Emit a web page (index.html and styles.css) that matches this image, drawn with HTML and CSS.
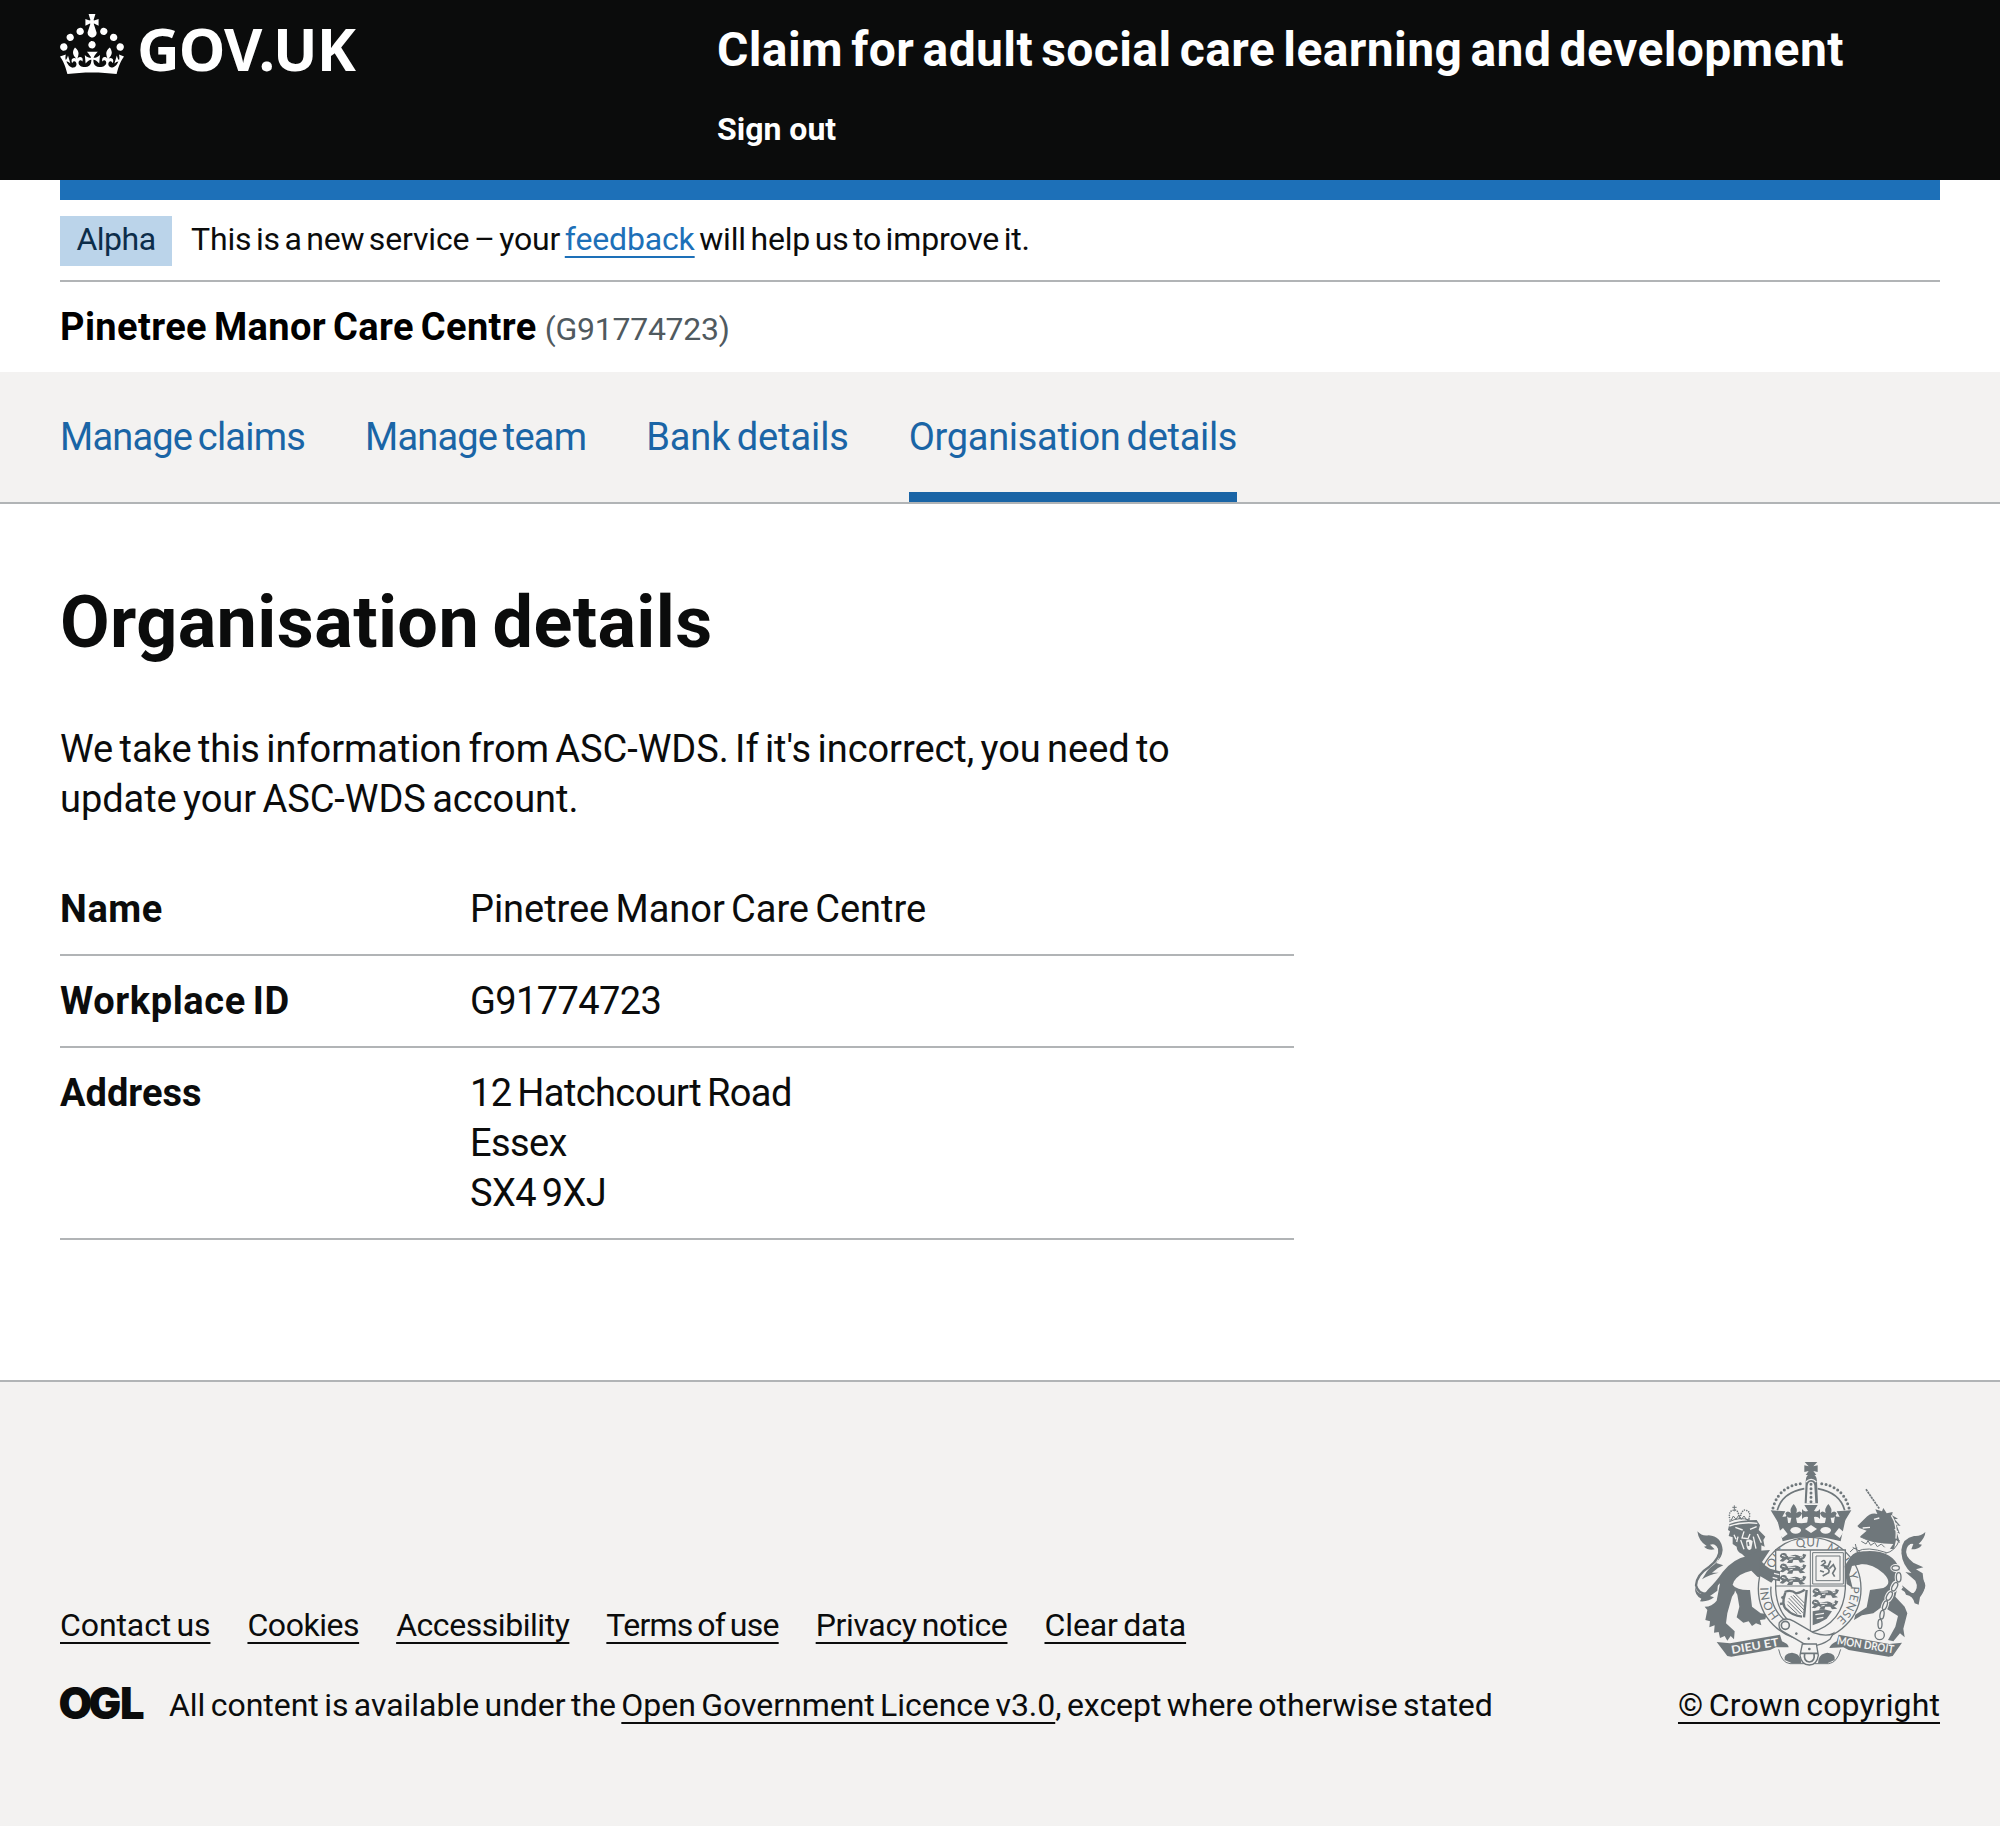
FILE: index.html
```
<!DOCTYPE html>
<html lang="en">
<head>
<meta charset="utf-8">
<title>Organisation details</title>
<link rel="stylesheet" href="styles.css">
</head>
<body>
<header class="header">
  <div class="container header-inner">
    <a class="logo" href="#" aria-label="GOV.UK">
      <svg class="crown" viewBox="0 0 32 30" width="64" height="60" fill="currentColor" aria-hidden="true">
        <path d="M22.6 10.4c-1 .4-2-.1-2.4-1-.4-.9.1-2 1-2.4.9-.4 2 .1 2.4 1s-.1 2-1 2.4m-5.9 6.7c-.9.4-2-.1-2.4-1-.4-.9.1-2 1-2.4.9-.4 2 .1 2.4 1s-.1 2-1 2.4m10.8-3.7c-1 .4-2-.1-2.4-1-.4-.9.1-2 1-2.4.9-.4 2 .1 2.4 1s0 2-1 2.4m3.3 4.8c-1 .4-2-.1-2.4-1-.4-.9.1-2 1-2.4.9-.4 2 .1 2.4 1s-.1 2-1 2.4M17 4.7l2.3 1.2V2.5l-2.3.7-.2-.2.9-3h-3.4l.9 3-.2.2c-.1.1-2.3-.7-2.3-.7v3.4L15 4.7c.1.1.1.2.2.2l-1.3 4c-.1.2-.1.4-.1.6 0 1.1.8 2 1.9 2.2h.7c1-.2 1.9-1.1 1.9-2.1 0-.2 0-.4-.1-.6l-1.3-4c-.1-.2 0-.2.1-.3m-7.6 5.7c.9.4 2-.1 2.4-1 .4-.9-.1-2-1-2.4-.9-.4-2 .1-2.4 1s0 2 1 2.4m-5 3c.9.4 2-.1 2.4-1 .4-.9-.1-2-1-2.4-.9-.4-2 .1-2.4 1s.1 2 1 2.4m-3.2 4.8c.9.4 2-.1 2.4-1 .4-.9-.1-2-1-2.4-.9-.4-2 .1-2.4 1s0 2 1 2.4m14.8 11c4.4 0 8.6.3 12.3.8 1.1-4.5 2.4-7 3.7-8.8l-2.5-.9c.2 1.3.3 1.9 0 2.7-.4-.4-.8-1.1-1.1-2.3l-1.2 4c.7-.5 1.3-.8 2-.9-1.1 2.5-2.6 3.1-3.5 3-1.1-.2-1.7-1.2-1.5-2.1.3-1.2 1.5-1.5 2.1-.1 1.1-2.3-.8-3-2-2.3 1.9-1.9 2.1-3.5.6-5.6-2.1 1.6-2.1 3.2-1.2 5.5-1.2-1.4-3.2-.6-2.5 1.6.9-1.4 2.1-.5 1.9.8-.2 1.1-1.7 2.1-3.5 1.9-2.7-.2-2.9-2.1-2.9-3.6.7-.1 1.9.5 2.9 1.9l.4-4.3c-1.1 1.1-2.1 1.4-3.2 1.4.4-1.2 2.1-3 2.1-3h-5.4s1.7 1.9 2.1 3c-1.1 0-2.1-.2-3.2-1.4l.4 4.3c1-1.4 2.2-2 2.9-1.9-.1 1.5-.2 3.4-2.9 3.6-1.9.2-3.4-.8-3.5-1.9-.2-1.3 1-2.2 1.9-.8.7-2.3-1.2-3-2.5-1.6.9-2.2.9-3.9-1.2-5.5-1.5 2-1.3 3.7.6 5.6-1.2-.7-3.1 0-2 2.3.6-1.4 1.8-1.1 2.1.1.2.9-.3 1.9-1.5 2.1-.9.2-2.4-.5-3.5-3 .6 0 1.2.3 2 .9l-1.2-4c-.3 1.1-.7 1.9-1.1 2.3-.3-.8-.2-1.4 0-2.7l-2.9.9C1.3 23 2.6 25.5 3.7 30c3.7-.5 7.9-.8 12.3-.8"/>
      </svg>
      <span class="wordmark">GOV.UK</span>
    </a>
    <div class="header-content">
      <a class="service-name" href="#">Claim for adult social care learning and development</a>
      <a class="sign-out" href="#">Sign out</a>
    </div>
  </div>
</header>

<div class="container">
  <div class="brand-bar"></div>
  <div class="phase">
    <strong class="tag">Alpha</strong>
    <span class="phase-text">This is a new service – your <a class="link" href="#">feedback</a> will help us to improve it.</span>
  </div>
  <div class="org"><span class="org-name">Pinetree Manor Care Centre</span><span class="org-id">(G91774723)</span></div>
</div>

<nav class="nav">
  <ul class="container nav-list">
    <li><a class="nav-link claims" href="#">Manage claims</a></li>
    <li><a class="nav-link team" href="#">Manage team</a></li>
    <li><a class="nav-link bank" href="#">Bank details</a></li>
    <li><a class="nav-link details current" href="#" aria-current="page">Organisation details</a></li>
  </ul>
</nav>

<main class="container main">
  <h1 class="title">Organisation details</h1>
  <p class="intro">We take this information from ASC-WDS. If it's incorrect, you need to update your ASC-WDS account.</p>
  <dl class="summary">
    <div class="row"><dt>Name</dt><dd class="name">Pinetree Manor Care Centre</dd></div>
    <div class="row"><dt>Workplace ID</dt><dd>G91774723</dd></div>
    <div class="row"><dt class="address">Address</dt><dd>12 Hatchcourt Road<br>Essex<br>SX4 9XJ</dd></div>
  </dl>
</main>

<footer class="footer">
  <div class="container footer-inner">
    <div class="meta">
      <ul class="footer-links">
        <li class="contact"><a href="#">Contact us</a></li>
        <li><a href="#">Cookies</a></li>
        <li><a href="#">Accessibility</a></li>
        <li class="terms"><a href="#">Terms of use</a></li>
        <li class="privacy"><a href="#">Privacy notice</a></li>
        <li class="clear"><a href="#">Clear data</a></li>
      </ul>
      <div class="licence">
        <svg class="ogl" viewBox="0 0 82 40" width="82" height="40" aria-hidden="true"><text class="ogl-text" x="-1.5 28.5 60" y="34">OGL</text></svg>
        <span class="licence-text">All content is available under the <a href="#">Open Government Licence v3.0</a>, except where otherwise stated</span>
      </div>
    </div>
    <div class="copyright">
      <svg class="crest" viewBox="42 66 750 612" width="250" height="204" aria-hidden="true">
        <defs>
          <path id="garter" d="M419 567A124 124 0 0 1 419 319A124 124 0 0 1 419 567"/>
          <g id="passant">
            <path class="f" d="M0 8q4-9 13-7 8 1 8 8 5 2 12 0 18-6 26 2l8-1 2-7 10 3-4 9q-6 6-9 6l10 7-16 2-5-8-15 0-3 9h-16l5-8-7-3-10 7-10-2 8-8q-9-3-7-9z"/>
            <path class="k thin-k" d="M6 8l10 3M24 12l22 0M60 14l9-2M28 20l10-2"/>
          </g>
          <g id="half-crown">
            <path class="dots" d="M309 204Q326 138 398 130"/>
            <path class="s5" d="M322 211Q336 158 403 146"/>
            <path class="f" d="M302 211l44 3-9 16q10 2 14-4l4 28-28-2z"/>
            <path class="f" d="M371 192q13 14 8 27 11-10 17 1-6 16-18 13l4 20h-22l4-20q-14 3-18-13 6-11 17-1-5-13 8-27z"/>
          </g>
          <g id="links">
            <ellipse cx="677" cy="384" rx="11" ry="7"/><ellipse cx="686" cy="412" rx="7" ry="14"/>
            <ellipse cx="674" cy="440" rx="7" ry="14" transform="rotate(28 674 440)"/>
            <ellipse cx="658" cy="468" rx="7" ry="14" transform="rotate(28 658 468)"/>
            <ellipse cx="645" cy="496" rx="6" ry="14" transform="rotate(20 645 496)"/>
            <ellipse cx="636" cy="524" rx="6" ry="13" transform="rotate(10 636 524)"/>
            <ellipse cx="630" cy="552" rx="6" ry="14"/>
            <circle cx="629" cy="585" r="14"/>
          </g>
        </defs>

        <!-- crown -->
        <path class="f" d="M404 66h38l-12 13 13-3v20l-13-3 9 12h-32l9-12-13 3v-20l13 3z"/>
        <path class="f" d="M423 100q18 4 18 24l3 66h-40l3-66q0-20 16-24z"/>
        <path class="b" d="M423 125q9 0 10 12l3 53h-26l3-53q1-12 10-12z"/>
        <path class="dots" d="M423 133V188"/>
        <path class="k" d="M408 126q15-16 31 0"/>
        <use href="#half-crown"/>
        <use href="#half-crown" transform="translate(846)scale(-1 1)"/>
        <path class="f" d="M403 195h40l-11 18q12 4 18-6v30q-7-9-18-6l3 20h-24l3-20q-11-3-18 6v-30q6 10 18 6z"/>
        <path class="f" d="M322 240q30 14 49 6 26 8 52-2 26 10 52 2 20 8 51-6l-14 64q-89-26-174 0z"/>
        <g class="b">
          <ellipse cx="377" cy="271" rx="16" ry="10"/><ellipse cx="467" cy="271" rx="16" ry="10"/>
          <path d="M405 267l18-12 18 12-18 12zM325 276l14-12 14 18-16 12zM521 276l-14-12-14 18 16 12z"/>
        </g>

        <!-- lion -->
        <path class="s6" d="M92 290Q140 296 148 326Q152 354 118 380Q80 404 78 436Q84 462 112 462"/>
        <path class="f" d="M82 274q14 16 34 12 38 2 42 44-2 26-22 38l24 8q-20 8-34 22l20 0q-30 6-50 20l10-16q8-16 26-28 24-18 12-48-8-18-24-12l14 14q-20 4-32-8l8-2q-24-14-28-44zM76 440q4 22 24 22l24-18 20-14-2 22q-14 10-22 16l12 4q-16 14-42 12l4-8q-22-12-18-36z"/>
        <path class="f" d="M178 252q30-12 82-12l10 16-4 14 20 20-6 10 4 20-10-4 0 24-14 20-34-8-10-10q-16-8-16-22l-12-8 0-20-12-4 4-14-6-4z"/>
        <path class="k" d="M196 262l22 8M240 268l20-8M222 274l-6 20 18 2 6-14M212 300l10 28M250 290l8 36M262 282l12 26M204 290l-4 16M192 284l6 14M178 258q40-14 84-8"/>
        <path class="b" d="M228 302q12-8 20 2l-4 22q-10 10-14-6z"/>
        <path class="s5" d="M234 306l2 12"/>
        <path class="dots thin" d="M180 240Q172 210 196 210Q206 212 208 236M234 242Q248 214 224 210Q212 214 210 238"/>
        <path class="s3" d="M178 245Q206 230 240 240M193 196v18M187 202h13M184 240l6-12 8 10 8-12 8 12 8-10 8 12"/>
        <path class="f" d="M232 348L268 332 300 330 276 366 300 388 330 398 326 408 332 426 312 420 310 432 288 418 262 410 244 392Q206 400 192 424L188 434Q204 450 186 470L172 520 168 550 194 574 192 598 182 588 172 602 164 588 150 594 146 576 132 578 134 556 118 562 120 544 106 540 112 510 104 500Q126 500 140 482L150 430 112 468Q100 464 116 446 136 428 158 396 190 356 232 348z"/>
        <path class="f" d="M186 434Q204 452 240 450L246 500 272 520 290 522 286 538 270 540 274 556 258 550 246 558 236 544 220 548 200 532 208 500 202 464z"/>

        <!-- unicorn -->
        <path class="horn" d="M588 148L628 206"/>
        <path class="f" d="M562 258L584 236Q602 216 622 222L616 208 636 214 640 204 650 220 668 216 666 226 684 236 674 238 692 258 680 256 690 282 680 276 690 310 678 300 672 326Q652 330 636 312 612 318 578 300L572 288 590 272 568 264z"/>
        <path class="k" d="M612 238l16-4M664 226q18 26 14 70M672 246l10 8M674 268l10 8M600 262l-22 2"/>
        <path class="b" d="M570 290Q610 310 670 312L650 340 560 338z"/>
        <path class="s3" d="M570 290Q610 312 662 306M562 334Q590 318 650 338M574 304l14 8 6-10 8 14 12-8 8 12 12-8 10 10M646 340Q676 334 688 300"/>
        <path class="s3" d="M548 322l22 12M556 312l8 34M540 336q10-14 22-12"/>
        <path class="f" d="M540 352Q570 326 630 336 690 352 690 410L676 470 704 500 712 520 700 566 704 592 690 580 670 604 654 600 676 560 684 528 652 508 636 500 610 520 576 526 552 540 556 524 590 502 600 450 640 444Q670 430 640 400 610 372 572 372L544 380 540 430 528 432 526 380z"/>
        <path class="s6" d="M750 300Q704 304 698 340Q700 372 728 398Q764 420 762 440Q752 468 722 462L696 446"/>
        <path class="f" d="M766 276q-14 14-34 12-34 6-38 42 0 28 34 70l-22-4 30 26q12 24-8 40l-32-26 12 28q22 4 26 26l12 4 4-22q14-18 16-36-8-20-8-36l-20-12 22-6-30-14q-28-22-20-42 6-18 20-14l-6 16q24 0 32-14l-10-2q20-20 20-36z"/>
        <use class="halo" href="#links"/>
        <use class="s4" href="#links"/>

        <!-- garter and shield -->
        <circle class="bs" cx="419" cy="446" r="154"/>
        <path class="s4" d="M303 440A116 116 0 0 0 360 552"/>
        <g class="garter-text">
          <text><textPath href="#garter" startOffset="102">HONI</textPath></text>
          <text><textPath href="#garter" startOffset="232">SOIT</textPath></text>
          <text><textPath href="#garter" startOffset="350">QUI</textPath></text>
          <text><textPath href="#garter" startOffset="440">MAL</textPath></text>
          <text><textPath href="#garter" startOffset="540">Y</textPath></text>
          <text><textPath href="#garter" startOffset="580">PENSE</textPath></text>
        </g>
        <path class="bs" d="M317 330H526V446Q520 550 421 578 322 550 317 446z"/>
        <path class="s3" d="M421 330V576M317 438H526M428 338h92v94h-92zM438 348h72v74h-72z"/>
        <path class="s5" d="M454 366q10-10 12 2l-10 8 18 4 8-18M462 382q20 4 14 16l-18 10M478 386l12-12 6 12-8 14 6 10M450 392l12 4"/>
        <use href="#passant" x="330" y="338"/><use href="#passant" x="330" y="370"/><use href="#passant" x="330" y="404"/>
        <use href="#passant" x="428" y="444"/><use href="#passant" x="426" y="478"/>
        <path class="f" d="M428 514l34-6 24 6-16 22-22 12-20 8z"/><path class="k" d="M436 524l26-4M440 536l20-4"/>
        <path class="s6" d="M344 456q20-8 34 4 20-4 26-12M346 458q-14 40 6 52 14 16 44 20M410 450L402 532M342 470l-8 4M340 490l-10 2"/>
        <path class="s3" d="M356 474L398 518M354 484L392 522M362 468L402 510M370 466L402 500M352 494L382 522M378 464L404 490"/>
        <path class="f" d="M268 350L276 370 300 386 330 394 330 424 310 420 304 428 270 408z"/>
        <path class="k" d="M312 400l16 4M308 412l14 4"/>
        <path class="f" d="M596 336Q556 330 542 350L524 378 530 432 548 444 538 404 546 378 596 368z"/>

        <!-- buckle and strap -->
        <path class="bs" d="M328 548Q344 528 372 544L430 578Q470 592 490 580L480 598Q440 628 400 610L338 574Q324 566 328 548z"/>
        <circle class="s5" cx="346" cy="556" r="12"/>
        <path class="f" d="M379 577a4 4 0 1 0 .1 0zM416 592a4 4 0 1 0 .1 0z"/>

        <!-- motto scroll -->
        <path class="f" d="M140 606L180 610 330 584 336 604Q356 612 356 622L318 622 300 630 184 650 172 648z"/>
        <path class="f" d="M696 608L658 612 506 584 500 604Q482 612 478 624L520 622 536 630 656 650 668 648z"/>
        <text class="motto" transform="translate(186 642)rotate(-10)" textLength="144" lengthAdjust="spacingAndGlyphs">DIEU ET</text>
        <text class="motto" transform="translate(500 613)rotate(9)" textLength="172" lengthAdjust="spacingAndGlyphs">MON DROIT</text>
        <path class="s3" d="M326 628Q334 668 360 671H476Q502 668 512 628"/>
        <path class="f" d="M344 660Q340 640 366 638 386 640 392 656L394 670H366zM494 660Q498 640 472 638 452 640 446 656L444 670H472z"/>
        <path class="bs" d="M397 612h42l6 34q-4 28-27 29-24-1-28-29z"/>
        <path class="s5" d="M404 640q-4 24 14 26 18-2 14-26M392 640h52"/>
        <circle class="f" cx="418" cy="627" r="4"/>
      </svg>
      <a class="copyright-link" href="#">© Crown copyright</a>
    </div>
  </div>
</footer>
</body>
</html>
```
FILE: styles.css
```
* { box-sizing: border-box; }

body {
  margin: 0;
  background: #fff;
  color: #0b0c0c;
  font-family: Roboto, "Liberation Sans", sans-serif;
  font-size: 38px;
  line-height: 50px;
  letter-spacing: -0.45px;
}

a { color: inherit; text-decoration: none; }
ul, dl, dd, p { margin: 0; padding: 0; list-style: none; }

.container { width: 1880px; margin: 0 auto; }

/* Header */
.header { height: 180px; background: #0b0c0c; color: #fff; }
.header-inner { display: flex; }
.logo { display: flex; width: 657px; padding-top: 14px; }
.crown { display: block; flex: none; }
.wordmark {
  margin: 4px 0 0 13px;
  font-family: "Noto Sans", "Liberation Sans", sans-serif;
  font-size: 59px;
  font-weight: 700;
  line-height: 60px;
  letter-spacing: -0.9px;
}
.header-content { display: flex; flex-direction: column; gap: 29px; padding-top: 20px; }
.service-name { font-size: 48px; font-weight: 700; line-height: 60px; letter-spacing: 0.38px; word-spacing: -4px; }
.sign-out { font-size: 32px; font-weight: 700; line-height: 40px; letter-spacing: 0; }

/* Phase banner */
.brand-bar { height: 20px; background: #1d70b8; }
.phase {
  display: flex;
  gap: 19px;
  height: 82px;
  padding: 16px 0 14px;
  border-bottom: 2px solid #b1b4b6;
  font-size: 32px;
  line-height: 46px;
}
.tag {
  width: 112px;
  height: 50px;
  background: #bbd4ea;
  color: #0c2d4a;
  font-weight: 400;
  text-align: center;
  letter-spacing: -0.5px;
}
.phase-text { letter-spacing: -0.15px; word-spacing: -3.3px; }
.link, .footer a {
  text-decoration: underline;
  text-decoration-thickness: 2px;
  text-underline-offset: 6px;
  text-decoration-skip-ink: none;
}
.link { color: #1d70b8; }

/* Organisation line */
.org { display: flex; gap: 8px; height: 90px; padding: 20px 0; }
.org-name { color: #000; font-weight: 700; letter-spacing: 0.4px; word-spacing: -3px; }
.org-id { color: #505a5f; font-size: 32px; line-height: 54px; letter-spacing: -0.26px; }

/* Section navigation */
.nav { background: #f3f2f1; border-bottom: 2px solid #b1b4b6; }
.nav-list { display: flex; gap: 60px; }
.nav-link { display: block; padding: 40px 0 30px; border-bottom: 10px solid transparent; color: #1a65a6; word-spacing: -3px; }
.claims, .team { letter-spacing: -0.8px; }
.bank { letter-spacing: -0.1px; }
.details { letter-spacing: -0.32px; }
.current { border-bottom-color: #1a65a6; }

/* Main content */
.main { height: 876px; padding-top: 79px; }
.title { margin: 0 0 61px; font-size: 72px; line-height: 80px; letter-spacing: 0.4px; word-spacing: -5px; }
.intro { width: 1234px; padding-right: 80px; letter-spacing: -0.05px; word-spacing: -3px; }
.summary { width: 1234px; margin-top: 40px; }
.row { display: flex; padding: 20px 0; border-bottom: 2px solid #b1b4b6; word-spacing: -3px; }
.row dt { width: 410px; font-weight: 700; letter-spacing: 0.6px; }
.row dt.address { letter-spacing: 0; }
.row dd { letter-spacing: -0.6px; }
.row dd.name { letter-spacing: -0.05px; }

/* Footer */
.footer {
  height: 446px;
  padding-top: 80px;
  background: #f3f2f1;
  border-top: 2px solid #b1b4b6;
  font-size: 32px;
  line-height: 40px;
  word-spacing: -2.5px;
}
.footer-inner { display: flex; justify-content: space-between; align-items: flex-end; }
.footer-links { display: flex; gap: 37px; margin-bottom: 40px; }
.contact, .clear { letter-spacing: -0.1px; }
.terms { letter-spacing: -0.75px; }
.privacy { letter-spacing: -0.35px; }
.licence { display: flex; gap: 27px; letter-spacing: -0.03px; }
.ogl { overflow: visible; }
.ogl-text {
  font-family: Inter, "Liberation Sans", sans-serif;
  font-size: 43.5px;
  font-weight: 900;
  letter-spacing: 0;
  fill: #0b0c0c;
}
.copyright { display: flex; flex-direction: column; align-items: center; gap: 19px; letter-spacing: 0.12px; }

/* Royal arms */
.crest { display: block; }
.crest .f { fill: #6f777b; }
.crest .b { fill: #f3f2f1; }
.crest .bs { fill: #f3f2f1; stroke: #6f777b; stroke-width: 4; }
.crest .k { fill: none; stroke: #f3f2f1; stroke-width: 4; }
.crest .thin-k { stroke-width: 3; }
.crest .s3 { fill: none; stroke: #6f777b; stroke-width: 3; }
.crest .s4 { fill: none; stroke: #6f777b; stroke-width: 4; }
.crest .s5 { fill: none; stroke: #6f777b; stroke-width: 5; }
.crest .s6 { fill: none; stroke: #6f777b; stroke-width: 7; }
.crest .halo { fill: #f3f2f1; stroke: #f3f2f1; stroke-width: 10; }
.crest .dots { fill: none; stroke: #6f777b; stroke-width: 9; stroke-linecap: round; stroke-dasharray: 0 13; }
.crest .thin { stroke-width: 5; stroke-dasharray: 0 7; }
.crest .horn { fill: none; stroke: #6f777b; stroke-width: 5; stroke-dasharray: 7 2; }
.garter-text { fill: #6f777b; font-family: Lato, sans-serif; font-size: 35px; letter-spacing: 1px; word-spacing: 0; }
.motto { fill: #f3f2f1; font-family: Lato, sans-serif; font-size: 34px; font-weight: 700; letter-spacing: 0; word-spacing: 0; }
```
